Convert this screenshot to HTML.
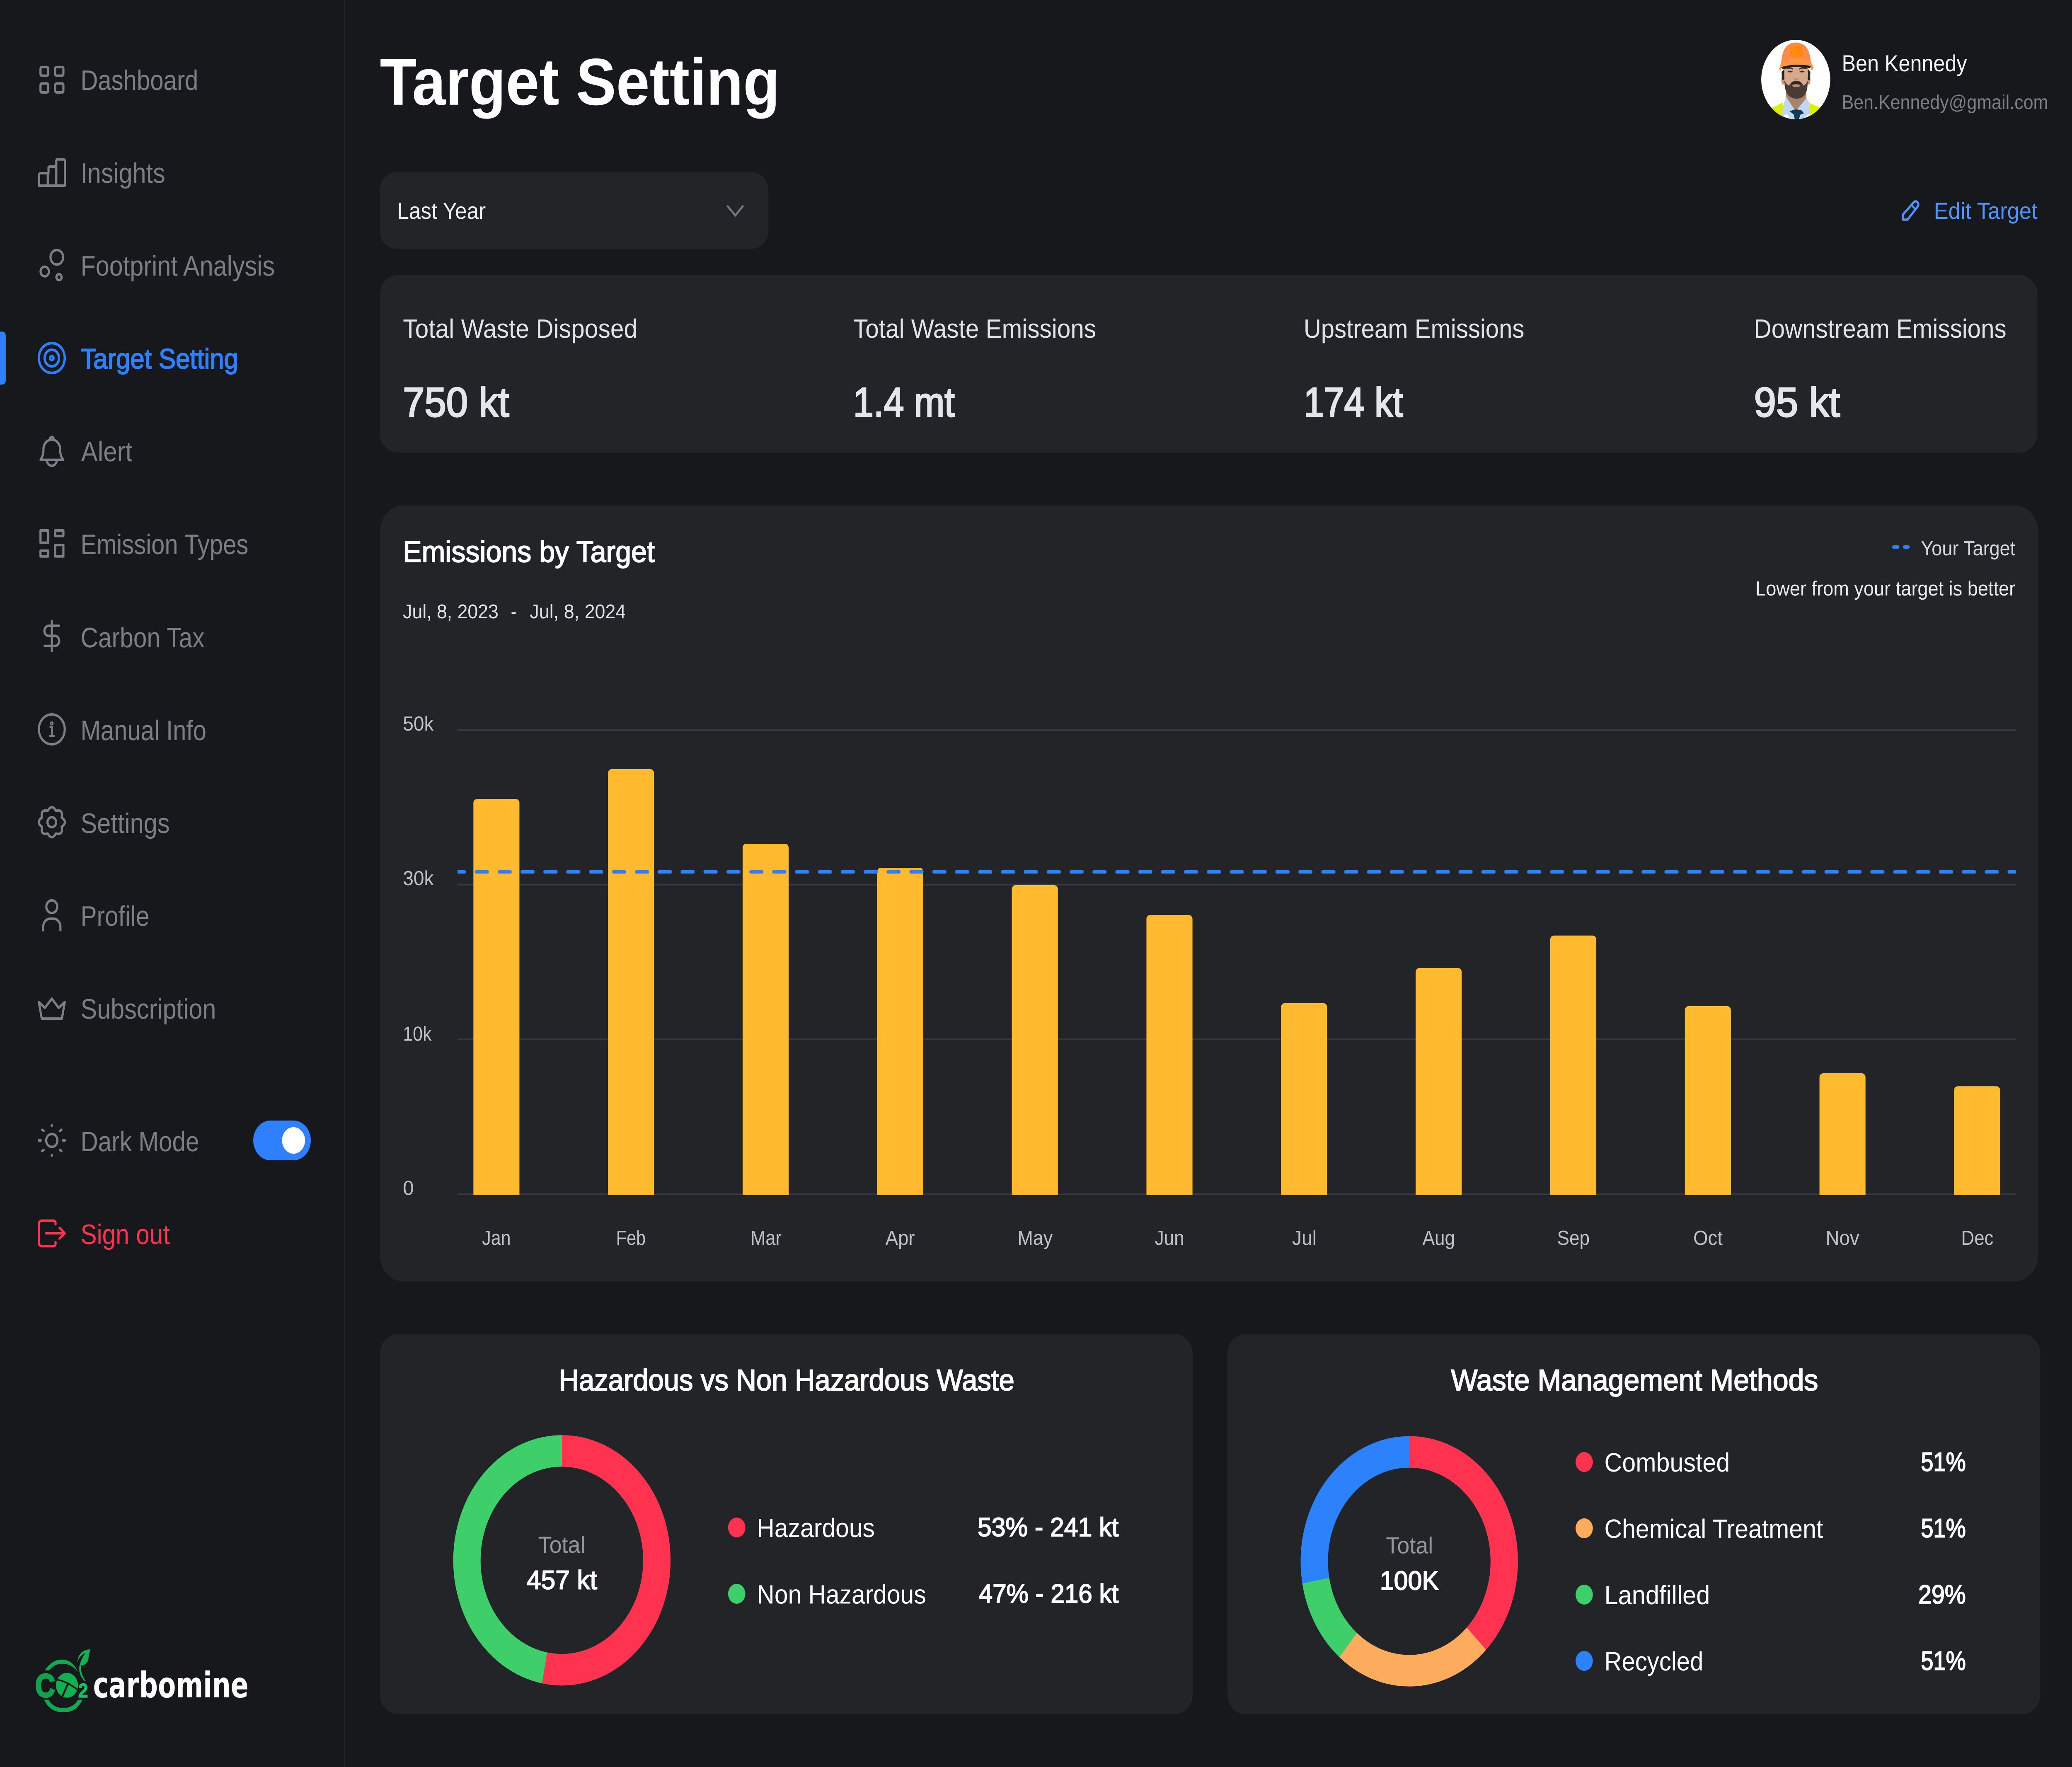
<!DOCTYPE html>
<html lang="en">
<head>
<meta charset="utf-8">
<title>Target Setting</title>
<style>
html,body{margin:0;padding:0;background:#16181B;width:100%;height:100%;overflow:hidden}
svg{display:block;width:100vw;height:100vh}
text{font-family:"Liberation Sans",Arial,sans-serif;text-rendering:geometricPrecision;white-space:pre}
.nav{font-size:17px;fill:#7A7E85}
.ic{fill:none;stroke:#7A7E85;stroke-width:1.5;stroke-linecap:round;stroke-linejoin:round}
.card{fill:#222428}
.semi{stroke-width:.5px}
.lab{font-size:16px;fill:#E1E3E9}
.val{font-size:25px;fill:#E4E6EC;stroke:#E4E6EC;stroke-width:.8px}
.ax{font-size:12.3px;fill:#BEC1C6}
.leg{font-size:16px;fill:#fff}
.pv{font-size:16px;fill:#fff;stroke:#fff}
</style>
</head>
<body>
<svg xmlns="http://www.w3.org/2000/svg" viewBox="0 0 1440 1066" preserveAspectRatio="none">
<defs>
<clipPath id="barclip"><rect x="318" y="440" width="1084" height="281"/></clipPath>
<clipPath id="dashclip"><rect x="318" y="520" width="1083" height="12"/></clipPath>
<clipPath id="av"><circle cx="426" cy="396" r="288"/></clipPath>
</defs>
<rect width="1440" height="1066" fill="#16181B"/>
<rect x="239" y="0" width="1" height="1066" fill="#202226"/>

<!-- Sidebar icons -->
<g class="ic">
<rect x="28.15" y="40.45" width="5.4" height="5.2" rx="1"/><rect x="38.35" y="40.45" width="5.7" height="5.2" rx="1"/>
<rect x="28.15" y="50.35" width="5.4" height="5.4" rx="1"/><rect x="38.35" y="50.35" width="5.7" height="5.4" rx="1"/>
<path d="M27.1 112h17.9a.2.2 0 0 0 .1-.1V97a.8.8 0 0 0-.8-.8h-4.4a.8.8 0 0 0-.8.8v3.5h-4.6a.8.8 0 0 0-.8.8v3.2h-5.6a1 1 0 0 0-1 1zM33.2 104.5V112M39.1 100.5V112"/>
<circle cx="39.5" cy="155.2" r="4.4"/><circle cx="31.1" cy="163.8" r="2.9"/><circle cx="41" cy="167.2" r="1.8"/>
<path d="M28.2 277.4c0-.6 2-1.5 2-6.4a5.8 5.8 0 0 1 11.6 0c0 4.9 2 5.8 2 6.4zM32.6 277.6a3.4 3.4 0 0 0 6.8 0M34.8 264.4a1.3 1.3 0 0 1 2.4 0"/>
<rect x="28.15" y="320" width="5.4" height="7.4"/><rect x="28.15" y="332.2" width="5.4" height="3.5"/>
<rect x="38.35" y="320" width="5.7" height="3.4"/><rect x="38.35" y="328.8" width="5.7" height="6.9"/>
<path d="M36 374.6V392.7M41 377.5H33.9a3 3 0 0 0 0 6.1h4.2a3 3 0 0 1 0 6.1H31"/>
<circle cx="36" cy="440" r="9"/><path d="M35 438.6h1.2V444M34.8 444h2.6" stroke-width="1.3"/><circle cx="36" cy="436.4" r=".5"/>
<g transform="translate(36 496)"><path d="M6.84-2.83Q11.3 0 6.84 2.83Q8 8 2.83 6.84Q0 11.3-2.83 6.84Q-8 8-6.84 2.83Q-11.3 0-6.84-2.83Q-8-8-2.83-6.84Q0-11.3 2.83-6.84Q8-8 6.84-2.83Z"/><circle r="3"/></g>
<circle cx="36" cy="547" r="3.8"/><path d="M30 561.2v-2a5 5 0 0 1 5-5h2a5 5 0 0 1 5 5v2"/>
<path d="M27 604.5L31.2 608 36 602.5 40.8 608 45 604.5 43 614.5H29Z"/>
<circle cx="36" cy="688" r="3.9"/>
<path d="M36 678.8v.4M36 696.8v.4M26.9 688h1.4M43.7 688h1.4M29.3 681.6l1.1.7M41.6 693.7l1.1.7M29.3 694.4l1.1-.7M41.6 682.3l1.1-.7"/>
</g>
<g fill="none" stroke="#2F80FF" stroke-width="1.6"><circle cx="36" cy="216" r="9"/><circle cx="36" cy="216" r="5"/><circle cx="36" cy="216" r="1.2"/></g>
<path d="M0 200h1.5a2.5 2.5 0 0 1 2.5 2.5v27a2.5 2.5 0 0 1-2.5 2.5H0z" fill="#2F80FF"/>
<g fill="none" stroke="#FF3350" stroke-width="1.5" stroke-linecap="round" stroke-linejoin="round">
<path d="M38.6 738.6V737.8a1.4 1.4 0 0 0-1.4-1.4H29a2 2 0 0 0-2 2V749.8a2 2 0 0 0 2 2h8.2a1.4 1.4 0 0 0 1.4-1.4V749.4M32 744H45M41.4 740.8L45 744 41.4 747.2"/>
</g>

<!-- Sidebar labels -->
<text class="nav" x="56" y="54.3" textLength="81.8" lengthAdjust="spacingAndGlyphs">Dashboard</text>
<text class="nav" x="56" y="110.3" textLength="58.8" lengthAdjust="spacingAndGlyphs">Insights</text>
<text class="nav" x="56" y="166.3" textLength="135" lengthAdjust="spacingAndGlyphs">Footprint Analysis</text>
<text class="nav semi" x="56" y="222.3" textLength="109.6" lengthAdjust="spacingAndGlyphs" style="fill:#2F80FF;stroke:#2F80FF">Target Setting</text>
<text class="nav" x="56.4" y="278.3" textLength="35.6" lengthAdjust="spacingAndGlyphs">Alert</text>
<text class="nav" x="56" y="334.3" textLength="116.6" lengthAdjust="spacingAndGlyphs">Emission Types</text>
<text class="nav" x="56" y="390.5" textLength="86.2" lengthAdjust="spacingAndGlyphs">Carbon Tax</text>
<text class="nav" x="56" y="446.5" textLength="87.4" lengthAdjust="spacingAndGlyphs">Manual Info</text>
<text class="nav" x="56" y="502.5" textLength="62" lengthAdjust="spacingAndGlyphs">Settings</text>
<text class="nav" x="56" y="558.5" textLength="47.8" lengthAdjust="spacingAndGlyphs">Profile</text>
<text class="nav" x="56" y="614.5" textLength="94.2" lengthAdjust="spacingAndGlyphs">Subscription</text>
<text class="nav" x="56" y="694.5" textLength="82.4" lengthAdjust="spacingAndGlyphs">Dark Mode</text>
<text class="nav" x="56" y="750.5" textLength="62" lengthAdjust="spacingAndGlyphs" style="fill:#FF3350">Sign out</text>
<rect x="176" y="676" width="40" height="24" rx="12" fill="#2F80FF"/>
<circle cx="204" cy="688" r="8" fill="#fff"/>

<!-- Logo -->
<path fill="#12A850" d="M31.2 1007.7Q36 1001.2 43 1001.2Q50.5 1001.2 54.2 1008.8Q50 1003.7 43 1003.7Q38 1003.7 34.3 1007.7Z"/>
<path fill="#12A850" d="M30.7 1025.4Q34.5 1033 44 1033Q53.5 1033 57.2 1025.4H54.2Q51 1030.4 44 1030.4Q37 1030.4 33.8 1025.4Z"/>
<path fill="#14B055" d="M62.7 995Q54.5 995.5 53.7 1002.9Q55 999 59.5 997Q56.5 1000.5 55.2 1005Q61.5 1004.5 61.5 1000ZM55.2 1005Q54.3 1010 58.7 1014.2L59.5 1014Q56 1010 56.3 1005Z"/>
<text x="24.6" y="1023.6" font-size="19.6" font-weight="700" fill="#10A34C" stroke="#10A34C" stroke-width="1" textLength="13.6" lengthAdjust="spacingAndGlyphs">C</text>
<ellipse cx="46.55" cy="1016.7" rx="7.65" ry="7.5" fill="#12AE52"/>
<path d="M39.4 1013.3Q46.5 1014.2 54.4 1019.8" fill="none" stroke="#16181B" stroke-width=".9"/>
<path d="M47.6 1015.2L43 1024" fill="none" stroke="#16181B" stroke-width="1.3"/>
<text x="54.4" y="1024" font-size="12" font-weight="700" fill="#17C060" stroke="#17C060" stroke-width=".4" textLength="6.8" lengthAdjust="spacingAndGlyphs">2</text>
<text x="64.7" y="1024" font-size="21.4" font-weight="700" fill="#fff" textLength="108" lengthAdjust="spacingAndGlyphs" style="font-family:'DejaVu Sans',sans-serif">carbomine</text>

<!-- Header -->
<text x="264" y="63.2" font-size="40" font-weight="700" fill="#fff" textLength="278" lengthAdjust="spacingAndGlyphs">Target Setting</text>

<g transform="translate(1212.5 15) scale(.08333)">
<g clip-path="url(#av)">
<circle cx="426" cy="396" r="288" fill="#fff"/>
<path fill="#DDF000" d="M225 602L318 563 320 660 380 700H490L540 660 542 565 630 600V720H225Z"/>
<path fill="#BFD8F0" d="M345 515L310 625 315 660 355 645 380 690H490L505 668 545 640 540 565 515 525 430 620Z"/>
<path fill="#A9826A" d="M345 480V520L425 625 515 530V470Z"/>
<path fill="#123A56" d="M375 625L420 612 470 615 495 640 465 650 450 690H420L410 650Z"/>
<ellipse cx="320" cy="395" rx="14" ry="38" fill="#C8906F"/><ellipse cx="535" cy="395" rx="14" ry="38" fill="#C8906F"/>
<path fill="#2A2422" d="M308 340L352 300H510L548 340 545 400H525L530 330H335L330 400 312 395Z"/>
<path fill="#D7A88D" d="M330 320Q430 290 528 320L525 440Q510 530 430 535Q350 530 332 440Z"/>
<path fill="#4A3C34" d="M330 400Q345 430 370 440Q400 400 430 405Q465 400 490 440Q515 430 527 400L522 460Q505 535 430 535Q355 530 338 460Z"/>
<path fill="#33281F" d="M375 432Q430 385 485 432Q430 420 375 432Z"/>
<ellipse cx="430" cy="440" rx="33" ry="10" fill="#C4907E"/>
<path fill="none" stroke="#B98468" stroke-width="7" d="M408 385Q430 405 452 385"/>
<ellipse cx="380" cy="338" rx="20" ry="6" fill="#3A2C26"/><ellipse cx="478" cy="338" rx="20" ry="6" fill="#3A2C26"/>
<path fill="none" stroke="#3A2C26" stroke-width="8" d="M350 318Q380 305 405 322M455 322Q480 305 510 318"/>
<path fill="#FF8A4A" d="M305 285Q310 130 425 128Q545 130 552 275Q430 235 305 285Z"/>
<path fill="#FF8A0E" d="M378 230V165L400 150H470L485 170 490 235Z"/>
<path fill="#FF9545" d="M288 320L305 270Q430 225 550 262L575 310 560 330 545 300Q430 280 310 305L300 335Z"/>
<path fill="#222" d="M305 305Q430 275 552 298L545 315Q430 285 320 322Z"/>
</g>
</g>
<text x="1280" y="43" font-size="14" fill="#F3F4F6" textLength="87" lengthAdjust="spacingAndGlyphs">Ben Kennedy</text>
<text x="1280" y="65.8" font-size="12" fill="#7B7F85" textLength="143.4" lengthAdjust="spacingAndGlyphs">Ben.Kennedy@gmail.com</text>

<!-- Dropdown row -->
<rect class="card" x="264" y="104" width="270" height="46" rx="11"/>
<text x="276" y="132" font-size="14" fill="#ECEDF0" textLength="61.6" lengthAdjust="spacingAndGlyphs">Last Year</text>
<path d="M505.4 124L511 130 516.6 124" fill="none" stroke="#73777C" stroke-width="1.3"/>
<path d="M1322.6 132.5V129.4L1329.8 122.2A1.7 1.7 0 0 1 1332.8 124.6L1325.7 132.5Z" fill="none" stroke="#4F94FF" stroke-width="1.4" stroke-linejoin="round"/>
<path d="M1328.4 123.7L1331 126.1" fill="none" stroke="#4F94FF" stroke-width="1.2"/>
<text x="1344" y="132" font-size="14" fill="#4F94FF" textLength="72" lengthAdjust="spacingAndGlyphs">Edit Target</text>

<!-- Stats card -->
<rect class="card" x="264" y="166" width="1152" height="107" rx="12"/>
<text class="lab" x="280" y="203.8" textLength="163" lengthAdjust="spacingAndGlyphs">Total Waste Disposed</text>
<text class="lab" x="593" y="203.8" textLength="168.8" lengthAdjust="spacingAndGlyphs">Total Waste Emissions</text>
<text class="lab" x="906" y="203.8" textLength="153.4" lengthAdjust="spacingAndGlyphs">Upstream Emissions</text>
<text class="lab" x="1219" y="203.8" textLength="175.4" lengthAdjust="spacingAndGlyphs">Downstream Emissions</text>
<text class="val" x="280" y="251.2" textLength="73.8" lengthAdjust="spacingAndGlyphs">750 kt</text>
<text class="val" x="593" y="251.2" textLength="70.5" lengthAdjust="spacingAndGlyphs">1.4 mt</text>
<text class="val" x="906" y="251.2" textLength="69" lengthAdjust="spacingAndGlyphs">174 kt</text>
<text class="val" x="1219" y="251.2" textLength="59.8" lengthAdjust="spacingAndGlyphs">95 kt</text>

<!-- Chart card -->
<rect class="card" x="264" y="305" width="1152.5" height="468" rx="16"/>
<text x="280" y="339" font-size="18" fill="#fff" stroke="#fff" class="semi" textLength="175" lengthAdjust="spacingAndGlyphs">Emissions by Target</text>
<text x="280" y="373" font-size="12" fill="#DFE1E6" textLength="66.4" lengthAdjust="spacingAndGlyphs">Jul, 8, 2023</text>
<text x="355" y="373" font-size="12" fill="#DFE1E6">-</text>
<text x="368.2" y="373" font-size="12" fill="#DFE1E6" textLength="66.8" lengthAdjust="spacingAndGlyphs">Jul, 8, 2024</text>
<path d="M1316 330H1319M1323.4 330H1326.2" stroke="#2F80FF" stroke-width="2" stroke-linecap="round"/>
<text x="1335" y="335" font-size="12.3" fill="#D5D7DC" textLength="65.6" lengthAdjust="spacingAndGlyphs">Your Target</text>
<text x="1220" y="359.3" font-size="12.3" fill="#E9EAEE" textLength="180.6" lengthAdjust="spacingAndGlyphs">Lower from your target is better</text>

<g stroke="#36383D" stroke-width="1"><path d="M318 440.5H1401M318 533.7H1401M318 627H1401M318 720.5H1401"/></g>
<text class="ax" x="280" y="440.8" textLength="21.4" lengthAdjust="spacingAndGlyphs">50k</text>
<text class="ax" x="280" y="534" textLength="21.4" lengthAdjust="spacingAndGlyphs">30k</text>
<text class="ax" x="280" y="627.9" textLength="20" lengthAdjust="spacingAndGlyphs">10k</text>
<text class="ax" x="280" y="720.9" textLength="7.6" lengthAdjust="spacingAndGlyphs">0</text>

<g fill="#FFBA30" clip-path="url(#barclip)">
<rect x="329" y="482" width="32" height="250" rx="2.5"/>
<rect x="422.55" y="464" width="32" height="270" rx="2.5"/>
<rect x="516.1" y="509" width="32" height="225" rx="2.5"/>
<rect x="609.65" y="523.5" width="32" height="210" rx="2.5"/>
<rect x="703.2" y="534" width="32" height="200" rx="2.5"/>
<rect x="796.75" y="552" width="32" height="180" rx="2.5"/>
<rect x="890.3" y="605.2" width="32" height="130" rx="2.5"/>
<rect x="983.85" y="584" width="32" height="150" rx="2.5"/>
<rect x="1077.4" y="564.4" width="32" height="170" rx="2.5"/>
<rect x="1170.95" y="607" width="32" height="130" rx="2.5"/>
<rect x="1264.5" y="647.5" width="32" height="90" rx="2.5"/>
<rect x="1358.05" y="655.3" width="32" height="80" rx="2.5"/>
</g>
<g clip-path="url(#dashclip)"><path d="M318 526H1401" fill="none" stroke="#2F80FF" stroke-width="2" stroke-linecap="round" stroke-dasharray="7.9 8" stroke-dashoffset="3"/></g>

<g class="ax">
<text x="335" y="751" textLength="20" lengthAdjust="spacingAndGlyphs">Jan</text>
<text x="428.2" y="751" textLength="20.6" lengthAdjust="spacingAndGlyphs">Feb</text>
<text x="521.6" y="751" textLength="21.6" lengthAdjust="spacingAndGlyphs">Mar</text>
<text x="615.4" y="751" textLength="20.4" lengthAdjust="spacingAndGlyphs">Apr</text>
<text x="707.2" y="751" textLength="24.4" lengthAdjust="spacingAndGlyphs">May</text>
<text x="802.6" y="751" textLength="20.4" lengthAdjust="spacingAndGlyphs">Jun</text>
<text x="898" y="751" textLength="17" lengthAdjust="spacingAndGlyphs">Jul</text>
<text x="988.6" y="751" textLength="22.6" lengthAdjust="spacingAndGlyphs">Aug</text>
<text x="1082.2" y="751" textLength="22.6" lengthAdjust="spacingAndGlyphs">Sep</text>
<text x="1176.8" y="751" textLength="20.4" lengthAdjust="spacingAndGlyphs">Oct</text>
<text x="1268.8" y="751" textLength="23.4" lengthAdjust="spacingAndGlyphs">Nov</text>
<text x="1363" y="751" textLength="22.4" lengthAdjust="spacingAndGlyphs">Dec</text>
</g>

<!-- Left donut card -->
<rect class="card" x="264" y="805" width="565" height="229" rx="12"/>
<text x="388.4" y="838.8" font-size="18" fill="#fff" stroke="#fff" class="semi" textLength="316.6" lengthAdjust="spacingAndGlyphs">Hazardous vs Non Hazardous Waste</text>
<g fill="none" stroke-width="19" transform="rotate(-90 390.5 941.3)">
<circle cx="390.5" cy="941.3" r="66" stroke="#3ECF6B"/>
<circle cx="390.5" cy="941.3" r="66" stroke="#FF334F" pathLength="360" stroke-dasharray="190.8 360"/>
</g>
<text x="374" y="936.8" font-size="14" fill="#94979C" textLength="32.8" lengthAdjust="spacingAndGlyphs">Total</text>
<text x="366" y="958.6" class="pv semi" textLength="49" lengthAdjust="spacingAndGlyphs">457 kt</text>
<circle cx="512" cy="921.5" r="6" fill="#FF334F"/>
<circle cx="512" cy="961.5" r="6" fill="#3ECF6B"/>
<text class="leg" x="526" y="927.2" textLength="82" lengthAdjust="spacingAndGlyphs">Hazardous</text>
<text class="leg" x="526" y="967.4" textLength="117.6" lengthAdjust="spacingAndGlyphs">Non Hazardous</text>
<text class="pv semi" x="679.4" y="926.8" textLength="98" lengthAdjust="spacingAndGlyphs">53% - 241 kt</text>
<text class="pv semi" x="680.2" y="966.9" textLength="97.2" lengthAdjust="spacingAndGlyphs">47% - 216 kt</text>

<!-- Right donut card -->
<rect class="card" x="853" y="805" width="565" height="229" rx="12"/>
<text x="1008.4" y="838.8" font-size="18" fill="#fff" stroke="#fff" class="semi" textLength="255.2" lengthAdjust="spacingAndGlyphs">Waste Management Methods</text>
<g fill="none" stroke-width="19" transform="rotate(-90 979.4 941.9)">
<circle cx="979.4" cy="941.9" r="66" stroke="#2B82FB"/>
<circle cx="979.4" cy="941.9" r="66" stroke="#FF334F" pathLength="360" stroke-dasharray="135.2 360"/>
<circle cx="979.4" cy="941.9" r="66" stroke="#FDAB5D" pathLength="360" stroke-dasharray="85.2 360" stroke-dashoffset="-135.2"/>
<circle cx="979.4" cy="941.9" r="66" stroke="#3ECF6B" pathLength="360" stroke-dasharray="39.8 360" stroke-dashoffset="-220.4"/>
</g>
<text x="963.2" y="937.1" font-size="14" fill="#94979C" textLength="32.8" lengthAdjust="spacingAndGlyphs">Total</text>
<text x="959" y="959" class="pv semi" textLength="41" lengthAdjust="spacingAndGlyphs">100K</text>
<circle cx="1101" cy="882" r="6" fill="#FF334F"/>
<circle cx="1101" cy="922" r="6" fill="#FDAB5D"/>
<circle cx="1101" cy="962" r="6" fill="#3ECF6B"/>
<circle cx="1101" cy="1002" r="6" fill="#2B82FB"/>
<text class="leg" x="1115" y="887.7" textLength="87.2" lengthAdjust="spacingAndGlyphs">Combusted</text>
<text class="leg" x="1115" y="927.7" textLength="152" lengthAdjust="spacingAndGlyphs">Chemical Treatment</text>
<text class="leg" x="1115" y="967.7" textLength="73.4" lengthAdjust="spacingAndGlyphs">Landfilled</text>
<text class="leg" x="1115" y="1007.7" textLength="68.8" lengthAdjust="spacingAndGlyphs">Recycled</text>
<text class="pv semi" x="1335" y="887.4" textLength="31.2" lengthAdjust="spacingAndGlyphs">51%</text>
<text class="pv semi" x="1335" y="927.4" textLength="31.2" lengthAdjust="spacingAndGlyphs">51%</text>
<text class="pv semi" x="1333.2" y="967.4" textLength="33" lengthAdjust="spacingAndGlyphs">29%</text>
<text class="pv semi" x="1335" y="1007.4" textLength="31.2" lengthAdjust="spacingAndGlyphs">51%</text>
</svg>
</body>
</html>
